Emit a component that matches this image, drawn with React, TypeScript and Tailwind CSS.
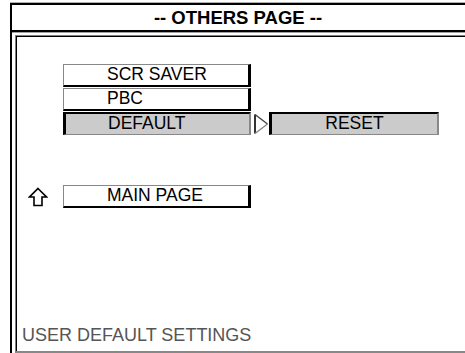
import React from "react";

function UpArrow() {
  return (
    <svg viewBox="0 0 20 20" className="h-[20px] w-[20px]" fill="none">
      <path
        d="M10 1.5L18.5 10H14V18.5H6V10H1.5Z"
        fill="#fff"
        stroke="#000"
        strokeWidth="1.6"
        strokeLinejoin="miter"
      />
    </svg>
  );
}

function RightTriangle() {
  return (
    <svg viewBox="0 0 16 22" className="h-[22px] w-[16px]" fill="none">
      <path d="M2 1.5V20.5" stroke="#333" strokeWidth="2" />
      <path d="M2 1.5L14.5 11" stroke="#444" strokeWidth="1.4" />
      <path d="M2 20.5L14.5 11" stroke="#888" strokeWidth="1.4" />
    </svg>
  );
}

function RaisedButton({ label }: { label: string }) {
  return (
    <div className="flex h-[23px] w-[188px] items-center border-t border-l border-b-2 border-r-[3px] border-t-[#888] border-l-[#888] border-b-black border-r-black bg-white pl-[43px] text-[17.5px] leading-none text-black">
      {label}
    </div>
  );
}

function SunkenButton({ label, center, width }: { label: string; center?: boolean; width: string }) {
  return (
    <div
      className={
        "flex h-[23px] items-center border-t-2 border-l-[3px] border-b border-r-2 border-t-black border-l-black border-b-[#888] border-r-[#888] bg-[#cbcbcb] text-[17.5px] leading-none text-black " +
        width +
        (center ? " justify-center" : " pl-[42px]")
      }
    >
      {label}
    </div>
  );
}

export default function App() {
  return (
    <div className="relative h-[353px] w-[465px] overflow-hidden bg-white font-['Liberation_Sans',Arial,sans-serif]">
      <div className="ml-[10px] mt-[3px] flex h-[350px] w-[480px] flex-col border-t-2 border-l-2 border-black shadow-[0_-1px_0_#b0b0b0]">
        <div className="flex h-[27px] items-center justify-center border-b-2 border-black pr-[26px] text-[18.5px] font-bold text-black">
          -- OTHERS PAGE --
        </div>
        <div className="h-px bg-[#a0a0a0]" />
        <div className="flex flex-1 flex-col pl-[3px] pt-[2px]">
          <div className="flex flex-1 flex-col border-t border-l border-b-2 border-t-[#808080] border-l-[#808080] border-b-[#888]">
            <div className="flex flex-1 flex-col border-t border-l border-black">
              <div className="flex flex-col gap-[1px] pl-[46px] pt-[27px]">
                <RaisedButton label="SCR SAVER" />
                <RaisedButton label="PBC" />
                <div className="flex items-center">
                  <SunkenButton label="DEFAULT" width="w-[188px]" />
                  <div className="ml-[2px] flex items-center">
                    <RightTriangle />
                  </div>
                  <SunkenButton label="RESET" center width="w-[170px]" />
                </div>
              </div>
              <div className="mt-[50px] flex items-center pl-[11px]">
                <UpArrow />
                <div className="ml-[15px]">
                  <RaisedButton label="MAIN PAGE" />
                </div>
              </div>
              <div className="mt-auto pb-[7px] pl-[5px] text-[18px] leading-none text-[#555]">
                USER DEFAULT SETTINGS
              </div>
            </div>
          </div>
        </div>
      </div>
    </div>
  );
}
